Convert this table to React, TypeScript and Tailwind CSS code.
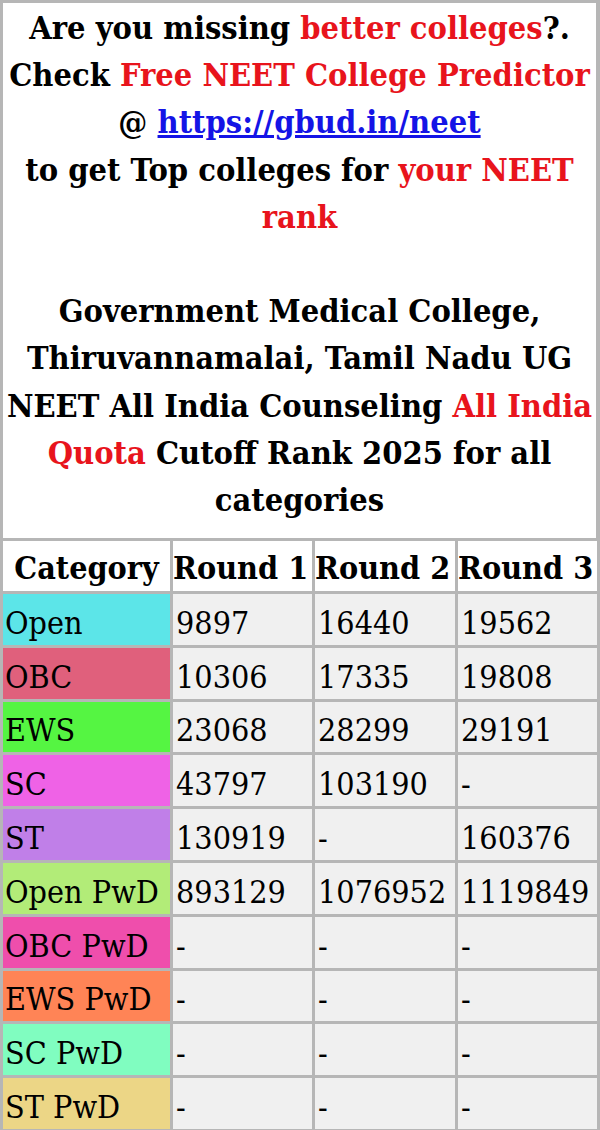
const rows = [
  { name: "Open", color: "bg-[#5ce5e8]", r1: "9897", r2: "16440", r3: "19562" },
  { name: "OBC", color: "bg-[#e0607c]", r1: "10306", r2: "17335", r3: "19808" },
  { name: "EWS", color: "bg-[#55f542]", r1: "23068", r2: "28299", r3: "29191" },
  { name: "SC", color: "bg-[#ef62e6]", r1: "43797", r2: "103190", r3: "-" },
  { name: "ST", color: "bg-[#c07fe8]", r1: "130919", r2: "-", r3: "160376" },
  { name: "Open PwD", color: "bg-[#b2ec78]", r1: "893129", r2: "1076952", r3: "1119849" },
  { name: "OBC PwD", color: "bg-[#ef4eac]", r1: "-", r2: "-", r3: "-" },
  { name: "EWS PwD", color: "bg-[#ff8456]", r1: "-", r2: "-", r3: "-" },
  { name: "SC PwD", color: "bg-[#80fdc0]", r1: "-", r2: "-", r3: "-" },
  { name: "ST PwD", color: "bg-[#ecd686]", r1: "-", r2: "-", r3: "-" },
]

const red = "text-[#e8141c]"

export default function App() {
  return (
    <div className="w-[600px] bg-[#b6b6b6] pt-[3px] pl-[3px] pr-[4px] pb-[4px] font-['DejaVu_Serif',serif] [font-stretch:condensed] text-black">
      {/* heading cell */}
      <div className="h-[535px] bg-white pt-[2px] text-center text-[32.3px] font-bold leading-[47.2px]">
        Are you missing <span className={red}>better colleges</span>?.
        <br />
        Check <span className={red}>Free NEET College Predictor</span>
        <br />
        @ <a href="#" className="text-[#1414e6] underline">https://gbud.in/neet</a>
        <br />
        to get Top colleges for <span className={red}>your NEET rank</span>
        <br />
        <br />
        Government Medical College, Thiruvannamalai, Tamil Nadu UG NEET All India Counseling{" "}
        <span className={red}>All India Quota</span> Cutoff Rank 2025 for all categories
      </div>

      {/* cutoff table */}
      <div className="mt-[3px] grid grid-cols-[167px_139px_140px_139px] gap-[3px] text-[32px]">
        {["Category", "Round 1", "Round 2", "Round 3"].map((h, i) => (
          <div
            key={h}
            className={`flex h-[50px] items-end whitespace-nowrap bg-white pb-[7px] font-bold leading-none ${i === 0 ? "justify-center" : "justify-start"}`}
          >
            {h}
          </div>
        ))}
        {rows.map((r) => (
          <Row key={r.name} {...r} />
        ))}
      </div>
    </div>
  )
}

function Row({ name, color, r1, r2, r3 }: { name: string; color: string; r1: string; r2: string; r3: string }) {
  return (
    <>
      <div className={`flex h-[50.8px] items-end whitespace-nowrap pb-[6px] pl-[2px] leading-none ${color}`}>{name}</div>
      {[r1, r2, r3].map((v, i) => (
        <div key={i} className="flex h-[50.8px] items-end whitespace-nowrap bg-[#f0f0f0] pb-[6px] pl-[3px] leading-none">
          {v}
        </div>
      ))}
    </>
  )
}
